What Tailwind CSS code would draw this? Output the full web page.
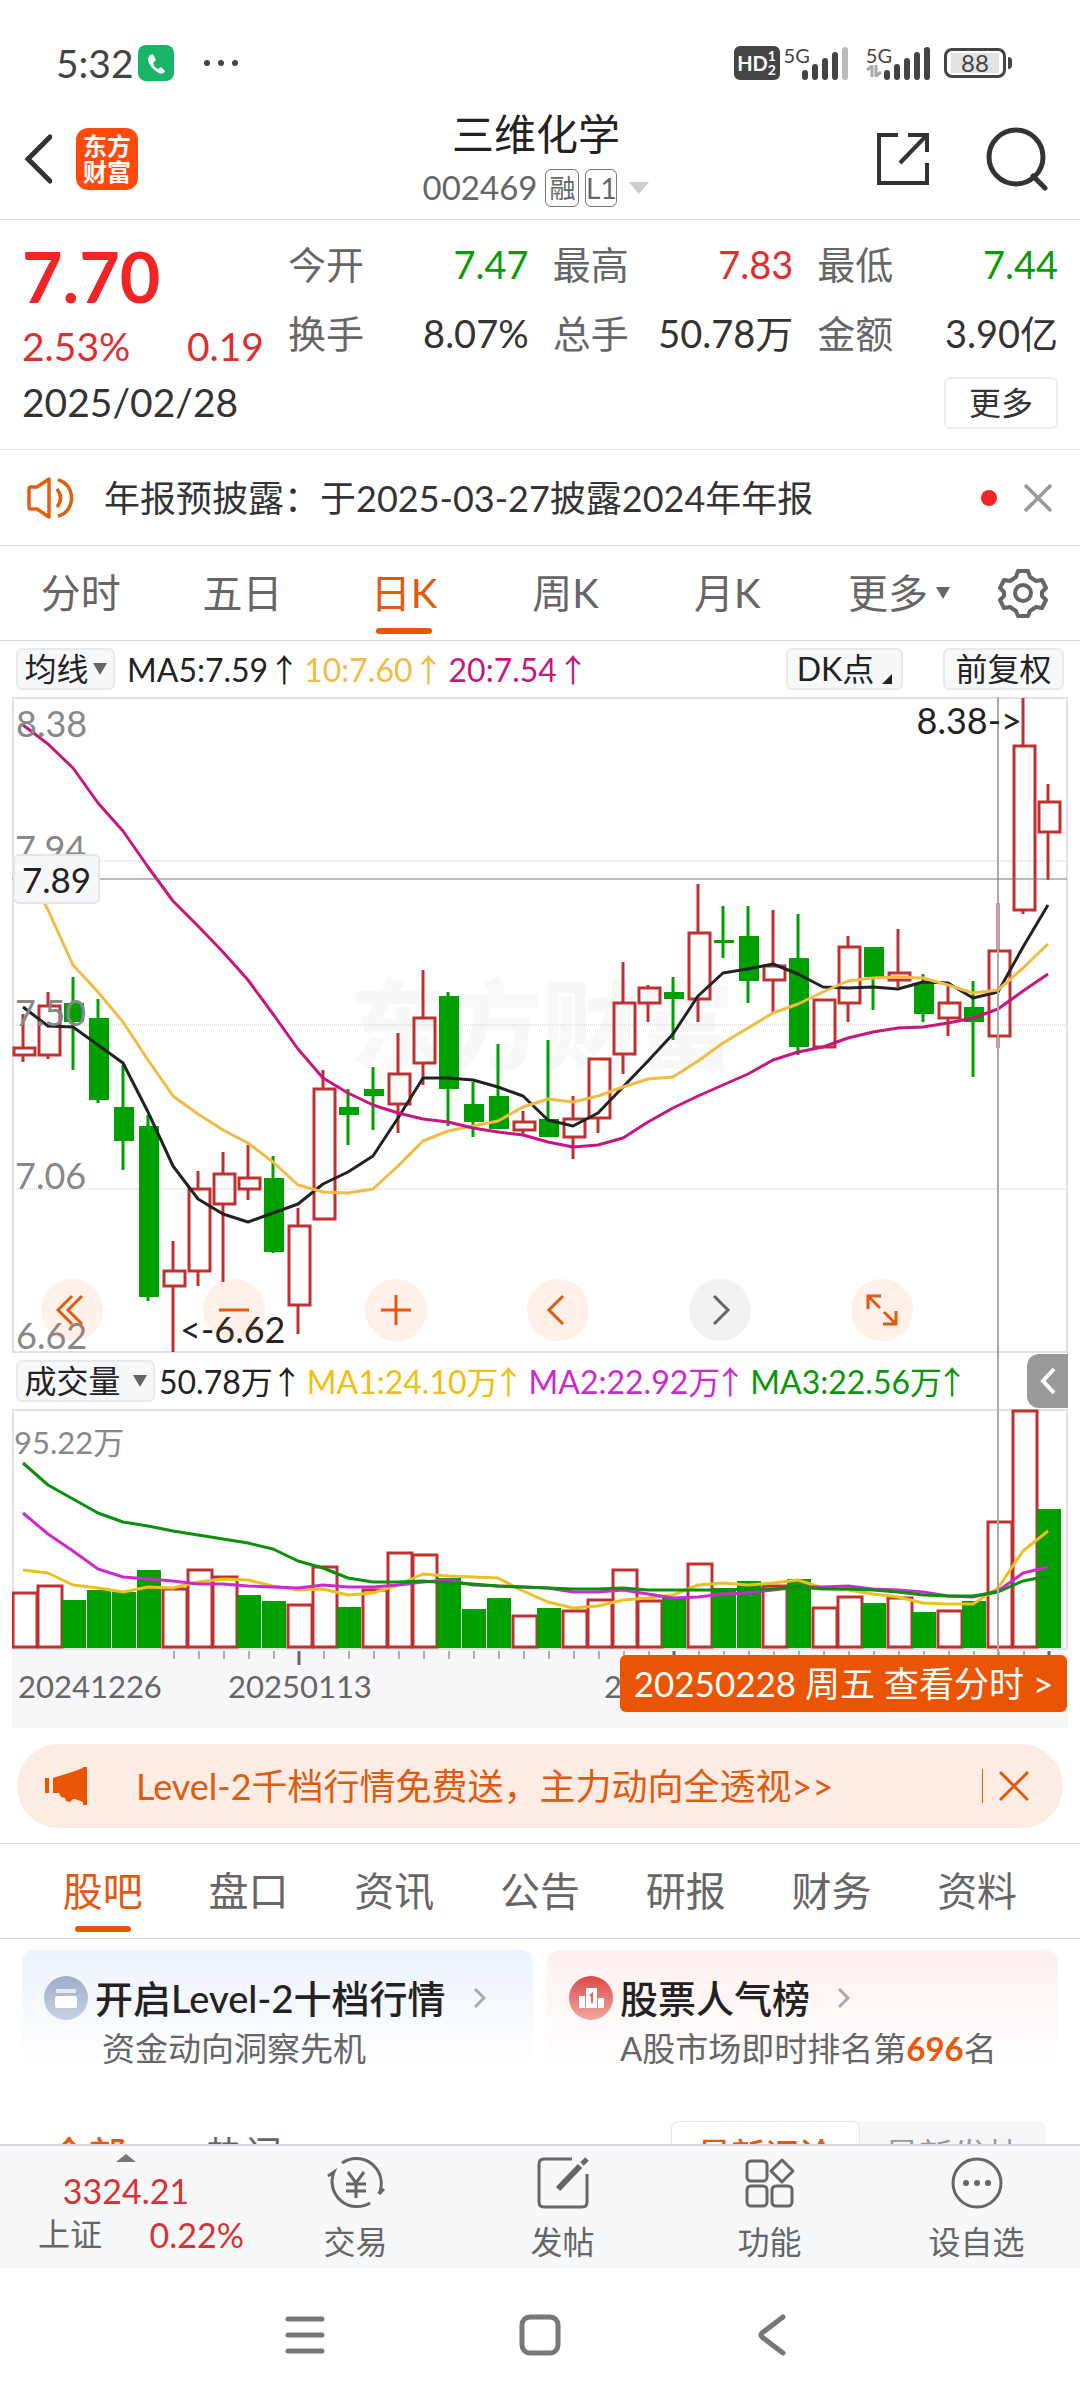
<!DOCTYPE html>
<html lang="zh-CN">
<head>
<meta charset="utf-8">
<meta name="viewport" content="width=device-width, initial-scale=1">
<title>三维化学 002469</title>
<script src="https://cdn.jsdelivr.net/npm/@tailwindcss/browser@4"></script>
</head>
<body class="bg-white font-['Lato','Noto_Sans_CJK_SC',sans-serif] text-[#333]">
<div class="flex h-screen flex-col overflow-hidden leading-none">

  <!-- Status bar -->
  <div class="flex h-[110px] shrink-0 items-center justify-between pt-4 pr-[68px] pl-14">
    <div class="flex items-center">
      <span class="text-[39px] text-[#444]">5:32</span>
      <svg class="ml-1 size-9" viewBox="0 0 36 36"><rect width="36" height="36" rx="8" fill="#18b566"/><path d="M12 10l3-1 3 6-3 3c1 3 2 5 5 6l3-2 4 4c-1 3-4 3-6 2-6-3-11-9-11-15z" fill="#fff"/></svg>
      <svg class="ml-7 h-2 w-10" viewBox="0 0 40 8" fill="#444"><circle cx="5" cy="4" r="3"/><circle cx="19" cy="4" r="3"/><circle cx="33" cy="4" r="3"/></svg>
    </div>
    <div class="flex items-center text-[#444]">
      <div class="flex h-[34px] w-[46px] items-center justify-center rounded-md bg-[#444] font-bold text-white">
        <span class="text-[20px]">HD</span><span class="flex flex-col text-[14px]"><span>1</span><span>2</span></span>
      </div>
      <div class="ml-1 flex h-9 items-start">
        <span class="text-[20px]">5G</span>
        <svg class="-ml-2 h-9 w-12" viewBox="0 0 48 36" stroke="#444" stroke-width="6" stroke-linecap="round"><path d="M3 32v-4M13 32V22M23 32V16M33 32V10"/><path d="M43 32V5" stroke="#bbb"/></svg>
      </div>
      <div class="ml-4 flex h-9 items-start">
        <span class="relative text-[20px]">5G
          <svg class="absolute top-5 left-0 h-3 w-4" viewBox="0 0 16 12" fill="none" stroke="#aaa" stroke-width="3"><path d="M1 5l5-4v11M10 0v11l5-4"/></svg>
        </span>
        <svg class="-ml-2 h-9 w-12" viewBox="0 0 48 36" stroke="#444" stroke-width="6" stroke-linecap="round"><path d="M3 32v-4M13 32V22M23 32V16M33 32V10M43 32V5"/></svg>
      </div>
      <div class="ml-3 flex h-[30px] w-[62px] items-center justify-center rounded-lg border-[3px] border-[#444]"><span class="w-12 bg-[#e3e3e3] text-center text-[24px] leading-5">88</span></div>
      <div class="ml-0.5 h-3 w-1 rounded-r bg-[#444]"></div>
    </div>
  </div>

  <!-- Title bar -->
  <header class="grid h-[110px] shrink-0 grid-cols-[1fr_auto_1fr] items-center border-b border-[#d8d8d8] pr-8 pb-3 pl-6">
    <div class="flex items-center gap-6">
      <button aria-label="返回"><svg class="h-[52px] w-7" viewBox="0 0 28 52" fill="none" stroke="#333" stroke-width="5" stroke-linecap="round"><path d="M26 4L4 26l22 22"/></svg></button>
      <div class="flex size-[62px] flex-col items-center justify-center rounded-xl bg-[#ff4a0c] text-[24px] leading-[26px] font-bold text-white"><span>东方</span><span>财富</span></div>
    </div>
    <div class="flex flex-col items-center gap-3">
      <h1 class="text-[42px] leading-[46px] text-[#222]">三维化学</h1>
      <div class="flex items-center text-[33px] text-[#666]">
        <span>002469</span>
        <span class="ml-2 flex h-[38px] w-[34px] items-center justify-center rounded-md border border-[#777] text-[26px]">融</span>
        <span class="ml-1.5 flex h-[38px] w-8 items-center justify-center rounded-md border border-[#777] text-[28px]">L1</span>
        <svg class="ml-3 h-3 w-5" viewBox="0 0 20 12"><path d="M0 0h20L10 12z" fill="#ccc"/></svg>
      </div>
    </div>
    <div class="flex items-center justify-end gap-[56px]">
      <button aria-label="分享"><svg class="h-[54px] w-[54px]" viewBox="0 0 54 54" fill="none" stroke="#333" stroke-width="4"><path d="M22 3H3v48h48V31M32 3h19v17M50 4L24 31"/></svg></button>
      <button aria-label="搜索"><svg class="h-[64px] w-[62px]" viewBox="0 0 62 64" fill="none" stroke="#333" stroke-width="5"><circle cx="30" cy="30" r="27"/><path d="M47 49l12 12" stroke-linecap="round"/></svg></button>
    </div>
  </header>

  <main class="min-h-0 flex-1 overflow-hidden">
    <!-- Quote summary -->
    <section class="flex h-[230px] flex-col border-b border-[#e6e6e6] px-[22px]">
      <div class="flex pt-2.5">
        <div class="w-[242px] text-[#dc3030]">
          <div class="text-[70px] leading-[92px] font-bold text-[#f12525]">7.70</div>
          <div class="flex justify-between pt-1 leading-10 text-[39px]"><span>2.53%</span><span>0.19</span></div>
        </div>
        <dl class="grid flex-1 grid-cols-3 gap-x-6 pl-[24px] text-[38px] leading-[69px] text-[#333]">
          <div class="flex justify-between"><dt class="text-[#666]">今开</dt><dd class="text-[#0a9a0a]">7.47</dd></div>
          <div class="flex justify-between"><dt class="text-[#666]">最高</dt><dd class="text-[#dc3030]">7.83</dd></div>
          <div class="flex justify-between"><dt class="text-[#666]">最低</dt><dd class="text-[#0a9a0a]">7.44</dd></div>
          <div class="flex justify-between"><dt class="text-[#666]">换手</dt><dd>8.07%</dd></div>
          <div class="flex justify-between"><dt class="text-[#666]">总手</dt><dd>50.78万</dd></div>
          <div class="flex justify-between"><dt class="text-[#666]">金额</dt><dd>3.90亿</dd></div>
        </dl>
      </div>
      <div class="flex flex-1 items-center justify-between pb-3">
        <span class="text-[39px]">2025/02/28</span>
        <button class="h-[52px] w-[114px] rounded-md border-2 border-[#eceef0] text-[32px]">更多</button>
      </div>
    </section>

    <!-- Announcement -->
    <section class="flex h-24 items-center border-b border-[#d8d8d8] pr-[28px] pl-[27px]">
      <svg class="h-[42px] w-12" viewBox="0 0 48 42" fill="none" stroke="#e06010" stroke-width="3.5"><path d="M2 12q0-2 2-2h6L22 2v38L10 32H4q-2 0-2-2zM30 12q7 9 0 18M31 3c18 4 18 32 0 36" stroke-linejoin="round"/></svg>
      <a href="#" class="ml-[29px] flex-1 text-[36px]">年报预披露：于2025-03-27披露2024年年报</a>
      <span class="size-4 rounded-full bg-[#f12525]"></span>
      <button class="ml-[27px]" aria-label="关闭"><svg class="size-7" viewBox="0 0 28 28" stroke="#999" stroke-width="3.5"><path d="M1 1l26 26M27 1L1 27"/></svg></button>
    </section>

    <!-- Period tabs -->
    <nav class="flex h-[95px] items-center border-b border-[#d8d8d8] pr-8 text-[40px] text-[#666]">
      <div class="grid h-full flex-1 grid-cols-5">
        <button>分时</button>
        <button>五日</button>
        <button class="relative text-[#e05a10]">日K<span class="absolute bottom-1.5 left-1/2 h-1.5 w-14 -translate-x-1/2 rounded-full bg-[#e65608]"></span></button>
        <button>周K</button>
        <button>月K</button>
      </div>
      <button class="ml-10 flex items-center gap-2">更多<svg class="h-3 w-3.5" viewBox="0 0 14 12"><path d="M0 0h14L7 12z" fill="#666"/></svg></button>
      <button class="ml-12" aria-label="设置"><svg class="h-[50px] w-[50px]" viewBox="0 0 50 50" fill="none" stroke="#666" stroke-width="4" stroke-linejoin="round"><path d="M20 3h10l2 6 6 4 6-1 4 8-4 4v4l4 4-4 8-6-1-6 4-2 5H20l-2-5-6-4-6 1-4-8 4-4v-4l-4-4 4-8 6 1 6-4z"/><circle cx="25" cy="25" r="8"/></svg></button>
    </nav>

    <!-- Charts -->
    <section class="relative mx-3">
      <div class="flex h-14 items-center pr-1 pl-1 text-[32px] text-[#222]">
        <button class="flex h-[42px] w-[99px] items-center justify-center gap-1 rounded-md border-2 border-[#e8eaec] bg-[#f7f8fa]">均线<svg class="h-3 w-3.5" viewBox="0 0 14 12"><path d="M0 0h14L7 12z" fill="#666"/></svg></button>
        <div class="ml-3 flex flex-1 gap-2 whitespace-nowrap">
          <span>MA5:7.59<span class="-mr-1 font-['Noto_Sans_CJK_SC']">↑</span></span>
          <span class="text-[#f2bb45]">10:7.60<span class="-mr-1 font-['Noto_Sans_CJK_SC']">↑</span></span>
          <span class="text-[#c7177e]">20:7.54<span class="-mr-1 font-['Noto_Sans_CJK_SC']">↑</span></span>
        </div>
        <button class="flex h-[42px] w-[117px] items-center justify-center rounded-md border-2 border-[#e8eaec] bg-[#f7f8fa]">DK点<svg class="mt-5 ml-2 size-2.5" viewBox="0 0 10 10"><path d="M10 0v10H0z" fill="#222"/></svg></button>
        <button class="ml-10 h-[42px] w-[121px] rounded-md border-2 border-[#e8eaec] bg-[#f7f8fa]">前复权</button>
      </div>

      <div class="relative">
        <svg id="price" class="block w-full overflow-visible" viewBox="12 697 1056 656" font-size="36"></svg>
        <div class="absolute inset-x-0 bottom-3 flex gap-[100px] pl-[29px] text-[#e05a10]">
          <button class="flex size-[62px] items-center justify-center rounded-full bg-[#ff5a14]/9" aria-label="最早"><svg class="size-8" viewBox="0 0 32 32" fill="none" stroke="currentColor" stroke-width="3"><path d="M16 2L2 16l14 14M26 2L12 16l14 14"/></svg></button>
          <button class="flex size-[62px] items-center justify-center rounded-full bg-[#ff5a14]/9" aria-label="缩小"><svg class="size-8" viewBox="0 0 32 32" stroke="currentColor" stroke-width="3"><path d="M1 16h30"/></svg></button>
          <button class="flex size-[62px] items-center justify-center rounded-full bg-[#ff5a14]/9" aria-label="放大"><svg class="size-8" viewBox="0 0 32 32" stroke="currentColor" stroke-width="3"><path d="M1 16h30M16 1v30"/></svg></button>
          <button class="flex size-[62px] items-center justify-center rounded-full bg-[#ff5a14]/9" aria-label="向左"><svg class="size-8" viewBox="0 0 32 32" fill="none" stroke="currentColor" stroke-width="3"><path d="M21 2L7 16l14 14"/></svg></button>
          <button class="flex size-[62px] items-center justify-center rounded-full bg-black/5 text-[#666]" aria-label="向右"><svg class="size-8" viewBox="0 0 32 32" fill="none" stroke="currentColor" stroke-width="3"><path d="M10 2l14 14-14 14"/></svg></button>
          <button class="flex size-[62px] items-center justify-center rounded-full bg-[#ff5a14]/9" aria-label="全屏"><svg class="size-8" viewBox="0 0 32 32" fill="none" stroke="currentColor" stroke-width="3"><path d="M2 15V2h13M2 2l12 12M30 17v13H17M30 30L18 18"/></svg></button>
        </div>
        <div class="absolute top-[157px] left-px flex h-[50px] w-[87px] items-center justify-center rounded-md border-2 border-[#e3e5e8] bg-[#f7f8fa] text-[35px] text-[#222]">7.89</div>
      </div>

      <div class="flex h-14 items-center pl-1 text-[32px] text-[#222]">
        <button class="flex h-[42px] w-[139px] items-center justify-center gap-3 rounded-md border-2 border-[#e8eaec] bg-[#f7f8fa]">成交量<svg class="h-3 w-3.5" viewBox="0 0 14 12"><path d="M0 0h14L7 12z" fill="#666"/></svg></button>
        <div class="ml-1 flex flex-1 gap-3 whitespace-nowrap">
          <span>50.78万<span class="-mr-2 -ml-0.5 font-['Noto_Sans_CJK_SC']">↑</span></span>
          <span class="text-[#f0c010]">MA1:24.10万<span class="-mr-2 -ml-1.5 font-['Noto_Sans_CJK_SC']">↑</span></span>
          <span class="text-[#cc2ad0]">MA2:22.92万<span class="-mr-2 -ml-1.5 font-['Noto_Sans_CJK_SC']">↑</span></span>
          <span class="text-[#0a960a]">MA3:22.56万<span class="-mr-2 -ml-1.5 font-['Noto_Sans_CJK_SC']">↑</span></span>
        </div>
        <button class="relative flex h-[54px] w-[41px] items-center justify-center rounded-l-xl bg-[#999]" aria-label="展开"><svg class="h-7 w-4" viewBox="0 0 16 28" fill="none" stroke="#fff" stroke-width="4"><path d="M14 2L3 14l11 12"/></svg></button>
      </div>

      <div class="relative">
        <svg id="volume" class="block w-full" viewBox="12 1409 1056 319" font-size="31"></svg>
        <a href="#" class="absolute right-px bottom-4 flex h-[57px] w-[447px] items-center justify-center rounded-md bg-[#ea5504] text-[35px] whitespace-pre text-white">20250228 周五 查看分时 &gt;</a>
      </div>
    </section>

    <!-- Promotion -->
    <section class="mx-[17px] mt-4 mb-[15px] flex h-[84px] items-center rounded-full bg-[#fdece3] pr-[34px] pl-7 text-[#e05a10]">
      <svg class="h-[38px] w-[42px]" viewBox="0 0 42 38" fill="#ea5504"><path d="M0 11h4v15H0zM8 11L30 4 38 1V0h4v38h-4v-3l-8-3-2 0-3 3-4-1-1-3-4-1-2-4H8z"/></svg>
      <a href="#" class="ml-[49px] flex-1 text-[36px]">Level-2千档行情免费送，主力动向全透视&gt;&gt;</a>
      <span class="h-[34px] w-px bg-[#e05a10]"></span>
      <button class="ml-4" aria-label="关闭"><svg class="size-[30px]" viewBox="0 0 30 30" stroke="#e05a10" stroke-width="3"><path d="M1 1l28 28M29 1L1 29"/></svg></button>
    </section>

    <!-- Content tabs -->
    <nav class="grid h-24 grid-cols-7 border-y border-[#d8d8d8] px-[30px] text-[40px] text-[#666]">
      <button class="relative text-[#e05a10]">股吧<span class="absolute bottom-1.5 left-1/2 h-1.5 w-14 -translate-x-1/2 rounded-full bg-[#e65608]"></span></button>
      <button>盘口</button>
      <button>资讯</button>
      <button>公告</button>
      <button>研报</button>
      <button>财务</button>
      <button>资料</button>
    </nav>

    <section class="grid grid-cols-2 gap-[14px] px-[22px] pt-[11px]">
      <a href="#" class="h-[160px] rounded-xl bg-linear-to-b from-[#edf4fd] to-white to-75% pt-[26px] pl-[22px]">
        <div class="flex items-center text-[38px] font-medium text-[#222]">
          <svg class="size-11" viewBox="0 0 44 44"><defs><linearGradient id="gb" x2="0" y2="1"><stop stop-color="#9eadca"/><stop offset="1" stop-color="#c9d1e2"/></linearGradient></defs><circle cx="22" cy="22" r="22" fill="url(#gb)"/><rect x="12" y="13" width="20" height="4" rx="1" fill="#e6ebf5"/><rect x="11" y="20" width="22" height="12" rx="2" fill="#fff"/></svg>
          <span class="ml-[7px]">开启Level-2十档行情</span>
          <svg class="ml-7 h-5 w-3" viewBox="0 0 12 20" fill="none" stroke="#aaa" stroke-width="3"><path d="M1 1l9 9-9 9"/></svg>
        </div>
        <p class="mt-3 pl-[58px] text-[33px] text-[#666]">资金动向洞察先机</p>
      </a>
      <a href="#" class="h-[160px] rounded-xl bg-linear-to-b from-[#fef1f0] to-white to-75% pt-[26px] pl-[22px]">
        <div class="flex items-center text-[38px] font-medium text-[#222]">
          <svg class="size-11" viewBox="0 0 44 44"><defs><linearGradient id="gr" x2="0" y2="1"><stop stop-color="#dc4a48"/><stop offset="1" stop-color="#f0a8a2"/></linearGradient></defs><circle cx="22" cy="22" r="22" fill="url(#gr)"/><path d="M10 20h6v12h-6zM17 12h11v20H17zM29 22h6v10h-6z" fill="#fff"/><path d="M21 20l2-2v9" fill="none" stroke="#e06a68" stroke-width="2"/></svg>
          <span class="ml-[7px]">股票人气榜</span>
          <svg class="ml-7 h-5 w-3" viewBox="0 0 12 20" fill="none" stroke="#aaa" stroke-width="3"><path d="M1 1l9 9-9 9"/></svg>
        </div>
        <p class="mt-3 pl-[51px] text-[33px] text-[#666]">A股市场即时排名第<b class="text-[#f0560a]">696</b>名</p>
      </a>
    </section>

    <section class="mt-[11px] flex items-start justify-between pr-[34px] pl-[50px]">
      <div class="flex gap-20 pt-[14px] text-[38px] text-[#666]"><button class="font-medium text-[#e05a10]">全部</button><button>热门</button></div>
      <div class="flex h-[68px] w-[375px] rounded-lg bg-[#f5f6f8] text-[34px] text-[#999]">
        <button class="flex-1 rounded-lg border border-[#e6e6e6] bg-white font-medium text-[#e05a10]">最新评论</button>
        <button class="flex-1">最新发帖</button>
      </div>
    </section>
  </main>

  <!-- Bottom toolbar -->
  <footer class="grid h-[125px] shrink-0 grid-cols-[252px_repeat(4,1fr)] border-t-2 border-[#d8d9dc] bg-[#f7f8fa] text-[32px] text-[#666]">
    <button class="flex flex-col items-center pt-2 text-[#dc3030]">
      <svg class="h-2 w-5" viewBox="0 0 20 8"><path d="M10 0l10 8H0z" fill="#777"/></svg>
      <span class="mt-3 text-[34px]">3324.21</span>
      <span class="mt-2.5 flex w-full justify-between pr-2 pl-[38px]"><span class="text-[#666]">上证</span><span class="text-[34px]">0.22%</span></span>
    </button>
    <button class="flex flex-col items-center gap-4 pt-2.5">
      <svg class="h-[54px] w-[60px]" viewBox="0 0 60 54" fill="none" stroke="#666" stroke-width="3"><path d="M16 7A25 25 0 0 1 53 38l5-5M44 47A25 25 0 0 1 8 16l-6 4"/><path d="M22 16l8 11 8-11M30 27v15M20 28h20M20 35h20"/></svg>
      <span>交易</span>
    </button>
    <button class="flex flex-col items-center gap-4 pt-2.5">
      <svg class="size-[54px]" viewBox="0 0 54 54" fill="none" stroke="#666" stroke-width="3"><path d="M36 3H8q-5 0-5 5v38q0 5 5 5h38q5 0 5-5V18"/><path d="M22 33L44 10" stroke-width="6"/><path d="M46 8l5-5" stroke-width="5"/></svg>
      <span>发帖</span>
    </button>
    <button class="flex flex-col items-center gap-4 pt-2.5">
      <svg class="size-[54px]" viewBox="0 0 54 54" fill="none" stroke="#666" stroke-width="3"><rect x="4" y="5" width="20" height="20" rx="4"/><rect x="4" y="30" width="20" height="20" rx="4"/><rect x="29" y="30" width="20" height="20" rx="4"/><path d="M39 4l11 11-11 11-11-11z" stroke-linejoin="round"/></svg>
      <span>功能</span>
    </button>
    <button class="flex flex-col items-center gap-4 pt-2.5">
      <svg class="size-[54px]" viewBox="0 0 54 54" fill="none" stroke="#666" stroke-width="3"><circle cx="27" cy="27" r="24"/><g fill="#666" stroke="none"><circle cx="16" cy="27" r="3"/><circle cx="27" cy="27" r="3"/><circle cx="38" cy="27" r="3"/></g></svg>
      <span>设自选</span>
    </button>
  </footer>

  <!-- System navigation -->
  <div class="flex h-[131px] shrink-0 items-center justify-center gap-[194px] pr-[8px]">
    <button aria-label="最近任务"><svg class="h-[42px] w-10" viewBox="0 0 40 42" stroke="#777" stroke-width="5" stroke-linecap="round"><path d="M3 5h34M3 21h34M3 37h34"/></svg></button>
    <button aria-label="主页"><svg class="size-[42px]" viewBox="0 0 42 42" fill="none" stroke="#777" stroke-width="5"><rect x="3" y="3" width="36" height="36" rx="8"/></svg></button>
    <button aria-label="返回"><svg class="h-[42px] w-8" viewBox="0 0 32 42" fill="none" stroke="#777" stroke-width="5" stroke-linecap="round"><path d="M28 3L7 19q-2 2 0 4l21 16"/></svg></button>
  </div>
</div>

<script>
// Each candle: [up?1:0, body top, body bottom, high, low], in chart units.
const candles = [
[1,1047,1056,1014,1062],[1,1005,1056,992,1059],[0,1003,1022,977,1070],[0,1018,1100,999,1103],[0,1107,1141,1065,1170],
[0,1126,1297,1115,1301],[1,1270,1287,1241,1352],[1,1188,1272,1171,1286],[1,1173,1205,1152,1282],[1,1177,1190,1145,1200],
[0,1178,1252,1156,1253],[1,1225,1306,1208,1334],[1,1088,1220,1070,1220],[0,1107,1115,1089,1145],[0,1089,1096,1067,1130],
[1,1073,1105,1033,1133],[1,1017,1064,970,1085],[0,996,1089,992,1126],[0,1104,1122,1082,1137],[0,1096,1129,1044,1129],
[1,1121,1131,1111,1135],[0,1119,1137,1040,1137],[1,1118,1138,1096,1159],[1,1058,1119,1058,1133],[1,1002,1055,962,1074],
[1,987,1004,985,1022],[0,992,999,977,1040],[1,932,1000,884,1022],[0,940,943,906,958],[0,936,981,906,1003],
[1,965,981,910,1013],[0,958,1047,914,1055],[1,999,1048,999,1048],[1,946,1004,936,1022],[0,947,977,947,1010],
[1,972,981,929,987],[0,983,1014,974,1022],[1,1002,1019,982,1036],[0,1007,1022,981,1077],[1,950,1037,903,1048],
[1,745,911,698,914],[1,801,833,784,880]];
const ma5 = [1007,1026,1027,1045,1063,1112,1166,1199,1214,1222,1213,1204,1184,1172,1156,1118,1078,1078,1080,1087,1096,1120,1126,1113,1087,1061,1034,996,973,969,964,974,987,988,987,989,982,983,998,992,947,905];
const ma10 = [860,910,965,992,1022,1060,1096,1114,1130,1143,1162,1185,1192,1193,1189,1166,1141,1131,1126,1121,1107,1099,1102,1096,1087,1079,1077,1061,1043,1028,1013,1004,992,981,978,977,978,985,993,990,968,944];
const ma20 = [725,744,768,803,831,867,901,926,952,980,1014,1049,1078,1093,1105,1113,1119,1122,1128,1132,1135,1142,1147,1145,1138,1122,1108,1096,1085,1074,1060,1052,1047,1038,1032,1028,1027,1023,1018,1009,991,974];
// Volume bars: [up?1:0, top].
const vols = [[1,1592],[1,1585],[0,1600],[0,1590],[0,1592],[0,1570],[1,1588],[1,1569],[1,1576],[0,1595],[0,1601],[1,1604],[1,1566],[0,1607],[1,1589],[1,1552],[1,1554],[0,1578],[0,1609],[0,1598],[1,1615],[0,1608],[1,1610],[1,1599],[1,1569],[1,1600],[0,1597],[1,1563],[0,1588],[0,1581],[1,1585],[0,1579],[1,1607],[1,1596],[0,1603],[1,1597],[0,1612],[1,1610],[0,1601],[1,1521],[1,1410],[0,1509]];
const v1 = [1570,1573,1585,1588,1592,1587,1588,1582,1579,1580,1586,1590,1589,1595,1593,1585,1574,1576,1577,1578,1591,1602,1608,1606,1600,1598,1595,1585,1583,1585,1583,1580,1588,1590,1594,1597,1603,1604,1604,1588,1551,1531];
const v2 = [1513,1534,1551,1569,1577,1579,1581,1584,1584,1586,1587,1588,1585,1587,1587,1585,1582,1580,1585,1586,1587,1588,1592,1592,1590,1594,1598,1597,1594,1593,1590,1587,1587,1586,1589,1590,1592,1596,1597,1591,1573,1567];
const v3 = [1463,1485,1499,1513,1522,1526,1531,1535,1539,1543,1549,1561,1568,1578,1582,1582,1581,1583,1584,1586,1587,1588,1589,1589,1588,1590,1590,1590,1590,1589,1589,1587,1589,1589,1590,1592,1595,1596,1596,1592,1581,1576];

const RED = '#bf3030', GREEN = '#00a000';
const x = i => 23 + 25 * i;
const line = (ys, c) => `<polyline fill="none" stroke="${c}" stroke-width="3" stroke-linejoin="round" points="${ys.map((y, i) => x(i) + ',' + y).join(' ')}"/>`;
const seg = (a, b, c, d, col, w, extra = '') => `<line x1="${a}" y1="${b}" x2="${c}" y2="${d}" stroke="${col}" stroke-width="${w}" ${extra}/>`;
const label = (a, b, t, c = '#888') => `<text x="${a}" y="${b}" fill="${c}">${t}</text>`;

// Price pane
let p = `<text x="350" y="1061" font-size="96" font-weight="900" fill="#f8f8f8">东方财富</text>`;
for (const y of [861, 1025, 1189]) p += seg(12, y, 1067, y, '#ccc', 1, 'stroke-dasharray="1 1"');
p += `<rect x="13" y="698" width="1054" height="654" fill="none" stroke="#e2e2e2" stroke-width="2"/>`;
candles.forEach(([up, t, b, h, l], i) => {
  const c = up ? RED : GREEN, cx = x(i);
  if (h < t) p += seg(cx, h, cx, t, c, 3);
  if (l > b) p += seg(cx, b, cx, l, c, 3);
  p += up
    ? `<rect x="${cx - 9}" y="${t + 1}" width="21" height="${b - t - 2}" fill="none" stroke="${c}" stroke-width="3"/>`
    : `<rect x="${cx - 9}" y="${t}" width="20" height="${b - t}" fill="${c}"/>`;
});
p += line(ma5, '#222') + line(ma10, '#f2bb45') + line(ma20, '#c7177e');
// The vertical crosshair runs on through the legend row to the volume pane.
p += seg(998, 697, 998, 1409, '#aaa', 2) + seg(12, 879, 1067, 879, '#777', 1);
p += label(16, 737, '8.38') + label(15, 862, '7.94') + label(15, 1026, '7.50') + label(15, 1189, '7.06') + label(16, 1349, '6.62');
p += `<text x="1022" y="734" text-anchor="end" fill="#222">8.38-&gt;</text>` + label(180, 1343, '&lt;-6.62', '#222');
document.getElementById('price').innerHTML = p;

// Volume pane and time axis
let v = `<rect x="12" y="1649" width="1056" height="79" fill="#f7f7fa"/>`;
v += `<rect x="13" y="1410" width="1054" height="239" fill="none" stroke="#e2e2e2" stroke-width="2"/>`;
vols.forEach(([up, t], i) => {
  const left = 12 + 25 * i;
  v += up
    ? `<rect x="${left + 1}" y="${t + 1}" width="24" height="${1646 - t}" fill="#fff" stroke="${RED}" stroke-width="3"/>`
    : `<rect x="${left}" y="${t}" width="24" height="${1648 - t}" fill="${GREEN}"/>`;
});
v += line(v1, '#ecc020') + line(v2, '#cc2ad0') + line(v3, '#0a900a');
for (let i = 6; i < 42; i++) {
  const major = [11, 26, 41].includes(i);
  v += seg(x(i) + 1, 1651, x(i) + 1, major ? 1665 : 1659, '#666', major ? 3 : 1);
}
v += seg(998, 1409, 998, 1655, '#aaa', 2);
v += label(14, 1454, '95.22万') + label(18, 1698, '20241226', '#666') + label(228, 1698, '20250113', '#666') + label(604, 1698, '20250214', '#666');
document.getElementById('volume').innerHTML = v;
</script>
</body>
</html>
